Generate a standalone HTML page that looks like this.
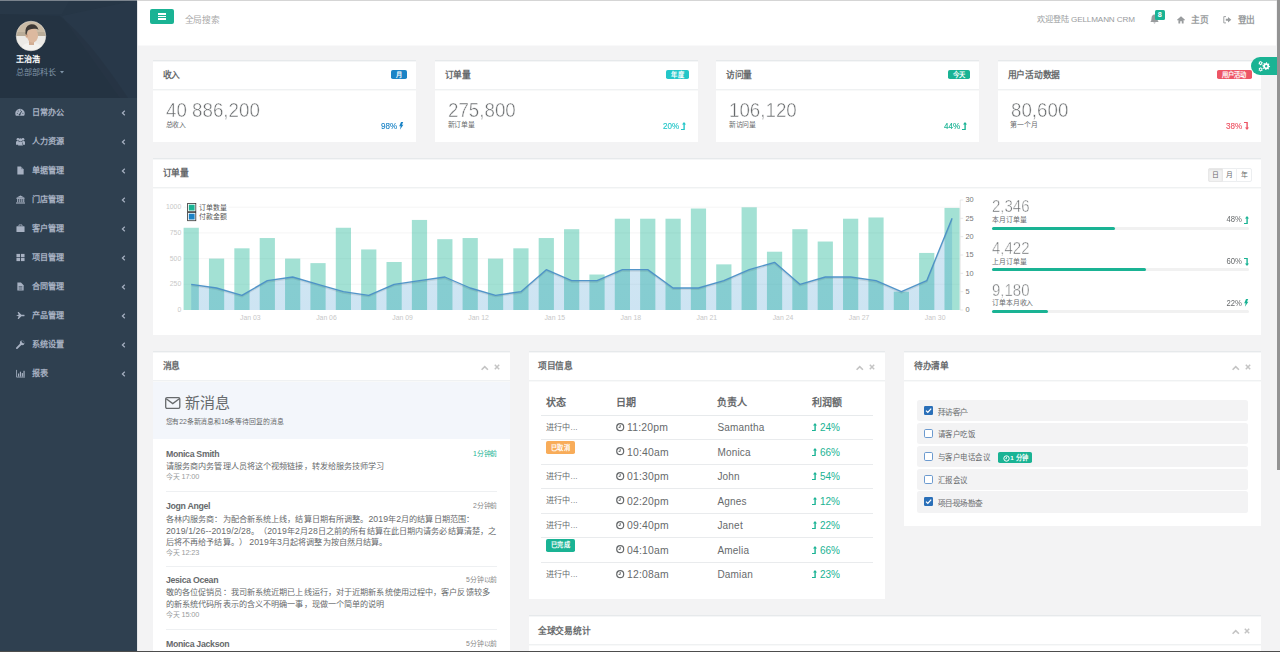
<!DOCTYPE html><html lang="zh-CN"><head><meta charset="utf-8"><style>
*{box-sizing:border-box;margin:0;padding:0}
html,body{width:1280px;height:652px;overflow:hidden}
body{position:relative;background:#f3f3f4;font-family:"Liberation Sans",sans-serif;color:#676a6c}
.t{position:absolute;white-space:nowrap;text-spacing-trim:space-all}
.l{font-size:1.07em}
.r{position:absolute}
svg{position:absolute;overflow:visible}
.b{font-weight:bold}
</style></head><body><div class="r" style="left:0.00px;top:0.00px;width:137.00px;height:652.00px;background:#2f4050"></div>
<svg style="left:0;top:0" width="137" height="98" viewBox="0 0 137 98"><rect width="137" height="98" fill="#263646"/><polygon points="0,0 70,0 62,14 0,14" fill="#283848"/><polygon points="62,16 137,0 137,98 120,98" fill="#293a4a" opacity="0.8"/><path d="M0 14 L60 16 Q90 40 128 98 L0 98Z" fill="#24313f" opacity="0.45"/></svg>
<svg style="left:15.5px;top:21px" width="30" height="30" viewBox="0 0 30 30"><defs><clipPath id="av"><circle cx="15" cy="15" r="14.8"/></clipPath><filter id="bl"><feGaussianBlur stdDeviation="0.6"/></filter></defs><g clip-path="url(#av)"><g filter="url(#bl)"><rect x="-2" y="-2" width="34" height="34" fill="#dcdad6"/><rect x="-2" y="-2" width="34" height="13" fill="#c9bba6"/><rect x="-2" y="11" width="34" height="4" fill="#b9ac98"/><rect x="-2" y="15" width="34" height="10" fill="#eceae6"/><path d="M3 32 Q5 23 12 22 L19 22 Q27 23 29 32 Z" fill="#f3f2ef"/><path d="M13 19 L18 19 L18 24 L13 24Z" fill="#d2ae94"/><ellipse cx="16.5" cy="14.5" rx="5.6" ry="7.2" fill="#dcb99f"/><ellipse cx="10.8" cy="14.8" rx="1.3" ry="2" fill="#d0a88c"/><path d="M9.5 13 Q8.5 5 14 3.5 Q21 2.5 22.5 9 Q21.5 7.5 18 7.8 Q13 8 11.5 10 Q10.8 11.5 10.5 14Z" fill="#3d3935"/></g></g><circle cx="15" cy="15" r="14.8" fill="none" stroke="#e8e4dc" stroke-width="0.5"/></svg>
<div class="t" style="left:15.50px;top:50.20px;line-height:20px;font-size:8.125px;letter-spacing:0.125px;color:#fff;font-weight:bold">王治浩</div>
<div class="t" style="left:15.50px;top:62.50px;line-height:20px;font-size:8.125px;letter-spacing:0.125px;color:#8095a8">总部部科长</div>
<svg style="left:60.3px;top:71px" width="4" height="3" viewBox="0 0 4 3"><path d="M0 0 H4 L2 2.4Z" fill="#8095a8"/></svg>
<svg style="left:15.40px;top:106.90px" width="10" height="10" viewBox="0 0 10 10"><path d="M0.9 8.8 A4.7 4.7 0 1 1 9.1 8.8 Z" fill="#a7b1c2"/><path d="M4.6 7.6 L6.6 4.2" stroke="#2f4050" stroke-width="1"/><circle cx="4.6" cy="7.6" r="0.9" fill="#2f4050"/><circle cx="2.3" cy="6.3" r="0.5" fill="#2f4050"/><circle cx="3.2" cy="4" r="0.5" fill="#2f4050"/><circle cx="5.6" cy="3.1" r="0.5" fill="#2f4050"/><circle cx="7.9" cy="6.3" r="0.5" fill="#2f4050"/></svg>
<div class="t" style="left:32.00px;top:102.70px;line-height:20px;font-size:8.125px;letter-spacing:0.125px;color:#a7b1c2;font-weight:bold">日常办公</div>
<svg style="left:121px;top:109.70px" width="5" height="6" viewBox="0 0 5 6"><path d="M3.8 0.8 L1.4 3 L3.8 5.2" fill="none" stroke="#a7b1c2" stroke-width="1.2"/></svg>
<svg style="left:15.90px;top:137.20px" width="9" height="9" viewBox="0 0 10 10"><circle cx="2.2" cy="2.6" r="1.5" fill="#a7b1c2"/><circle cx="7.8" cy="2.6" r="1.5" fill="#a7b1c2"/><circle cx="5" cy="3.2" r="1.9" fill="#a7b1c2"/><path d="M0 8.5 V5.8 Q0 4.4 1.5 4.4 H3 V8.5Z M10 8.5 V5.8 Q10 4.4 8.5 4.4 H7 V8.5Z M2.4 9.5 V7 Q2.4 5.3 4 5.3 H6 Q7.6 5.3 7.6 7 V9.5Z" fill="#a7b1c2"/></svg>
<div class="t" style="left:32.00px;top:131.70px;line-height:20px;font-size:8.125px;letter-spacing:0.125px;color:#a7b1c2;font-weight:bold">人力资源</div>
<svg style="left:121px;top:138.70px" width="5" height="6" viewBox="0 0 5 6"><path d="M3.8 0.8 L1.4 3 L3.8 5.2" fill="none" stroke="#a7b1c2" stroke-width="1.2"/></svg>
<svg style="left:15.90px;top:166.20px" width="9" height="9" viewBox="0 0 10 10"><path d="M1.5 0.5 H5.5 L8.5 3.5 V9.5 H1.5 Z" fill="#a7b1c2"/><path d="M5.5 0.5 V3.5 H8.5" fill="#2f4050" opacity="0.35"/></svg>
<div class="t" style="left:32.00px;top:160.70px;line-height:20px;font-size:8.125px;letter-spacing:0.125px;color:#a7b1c2;font-weight:bold">单据管理</div>
<svg style="left:121px;top:167.70px" width="5" height="6" viewBox="0 0 5 6"><path d="M3.8 0.8 L1.4 3 L3.8 5.2" fill="none" stroke="#a7b1c2" stroke-width="1.2"/></svg>
<svg style="left:15.90px;top:195.20px" width="9" height="9" viewBox="0 0 10 10"><path d="M5 0.5 L9.8 3 H0.2 Z" fill="#a7b1c2"/><rect x="0.5" y="3.3" width="9" height="1" fill="#a7b1c2"/><rect x="1.3" y="4.5" width="1.2" height="3.6" fill="#a7b1c2"/><rect x="3.6" y="4.5" width="1.2" height="3.6" fill="#a7b1c2"/><rect x="5.9" y="4.5" width="1.2" height="3.6" fill="#a7b1c2"/><rect x="8" y="4.5" width="1.2" height="3.6" fill="#a7b1c2"/><rect x="0" y="8.3" width="10" height="1.2" fill="#a7b1c2"/></svg>
<div class="t" style="left:32.00px;top:189.70px;line-height:20px;font-size:8.125px;letter-spacing:0.125px;color:#a7b1c2;font-weight:bold">门店管理</div>
<svg style="left:121px;top:196.70px" width="5" height="6" viewBox="0 0 5 6"><path d="M3.8 0.8 L1.4 3 L3.8 5.2" fill="none" stroke="#a7b1c2" stroke-width="1.2"/></svg>
<svg style="left:15.90px;top:224.20px" width="9" height="9" viewBox="0 0 10 10"><rect x="0.5" y="2.5" width="9" height="6.5" rx="0.6" fill="#a7b1c2"/><path d="M3.3 2.5 V1 H6.7 V2.5" fill="none" stroke="#a7b1c2" stroke-width="0.9"/></svg>
<div class="t" style="left:32.00px;top:218.70px;line-height:20px;font-size:8.125px;letter-spacing:0.125px;color:#a7b1c2;font-weight:bold">客户管理</div>
<svg style="left:121px;top:225.70px" width="5" height="6" viewBox="0 0 5 6"><path d="M3.8 0.8 L1.4 3 L3.8 5.2" fill="none" stroke="#a7b1c2" stroke-width="1.2"/></svg>
<svg style="left:15.90px;top:253.20px" width="9" height="9" viewBox="0 0 10 10"><rect x="0.5" y="1" width="4" height="3.6" fill="#a7b1c2"/><rect x="5.5" y="1" width="4" height="3.6" fill="#a7b1c2"/><rect x="0.5" y="5.4" width="4" height="3.6" fill="#a7b1c2"/><rect x="5.5" y="5.4" width="4" height="3.6" fill="#a7b1c2"/></svg>
<div class="t" style="left:32.00px;top:247.70px;line-height:20px;font-size:8.125px;letter-spacing:0.125px;color:#a7b1c2;font-weight:bold">项目管理</div>
<svg style="left:121px;top:254.70px" width="5" height="6" viewBox="0 0 5 6"><path d="M3.8 0.8 L1.4 3 L3.8 5.2" fill="none" stroke="#a7b1c2" stroke-width="1.2"/></svg>
<svg style="left:15.90px;top:282.20px" width="9" height="9" viewBox="0 0 10 10"><path d="M1.5 0.5 H5.5 L8.5 3.5 V9.5 H1.5 Z" fill="#a7b1c2"/><path d="M3 5 H7 M3 6.5 H7 M3 8 H7" stroke="#2f4050" stroke-width="0.6"/></svg>
<div class="t" style="left:32.00px;top:276.70px;line-height:20px;font-size:8.125px;letter-spacing:0.125px;color:#a7b1c2;font-weight:bold">合同管理</div>
<svg style="left:121px;top:283.70px" width="5" height="6" viewBox="0 0 5 6"><path d="M3.8 0.8 L1.4 3 L3.8 5.2" fill="none" stroke="#a7b1c2" stroke-width="1.2"/></svg>
<svg style="left:15.90px;top:311.20px" width="9" height="9" viewBox="0 0 10 10"><path d="M0 5 L3 4.3 L1.8 1 L3 1 L6 4.3 L9.2 4.3 Q10 5 9.2 5.7 L6 5.7 L3 9 L1.8 9 L3 5.7 Z" fill="#a7b1c2"/></svg>
<div class="t" style="left:32.00px;top:305.70px;line-height:20px;font-size:8.125px;letter-spacing:0.125px;color:#a7b1c2;font-weight:bold">产品管理</div>
<svg style="left:121px;top:312.70px" width="5" height="6" viewBox="0 0 5 6"><path d="M3.8 0.8 L1.4 3 L3.8 5.2" fill="none" stroke="#a7b1c2" stroke-width="1.2"/></svg>
<svg style="left:15.90px;top:340.20px" width="9" height="9" viewBox="0 0 10 10"><path d="M1 9 L5 5" stroke="#a7b1c2" stroke-width="2" stroke-linecap="round"/><circle cx="6.8" cy="3.2" r="2.6" fill="#a7b1c2"/><path d="M7.2 0.2 L9.8 2.8 L8 4 L6 2 Z" fill="#2f4050"/></svg>
<div class="t" style="left:32.00px;top:334.70px;line-height:20px;font-size:8.125px;letter-spacing:0.125px;color:#a7b1c2;font-weight:bold">系统设置</div>
<svg style="left:121px;top:341.70px" width="5" height="6" viewBox="0 0 5 6"><path d="M3.8 0.8 L1.4 3 L3.8 5.2" fill="none" stroke="#a7b1c2" stroke-width="1.2"/></svg>
<svg style="left:15.90px;top:369.20px" width="9" height="9" viewBox="0 0 10 10"><path d="M0.6 1 V9 H10" fill="none" stroke="#a7b1c2" stroke-width="0.9"/><rect x="2.2" y="5" width="1.3" height="3.5" fill="#a7b1c2"/><rect x="4.3" y="3" width="1.3" height="5.5" fill="#a7b1c2"/><rect x="6.4" y="4.5" width="1.3" height="4" fill="#a7b1c2"/><rect x="8.3" y="2" width="1.3" height="6.5" fill="#a7b1c2"/></svg>
<div class="t" style="left:32.00px;top:363.70px;line-height:20px;font-size:8.125px;letter-spacing:0.125px;color:#a7b1c2;font-weight:bold">报表</div>
<svg style="left:121px;top:370.70px" width="5" height="6" viewBox="0 0 5 6"><path d="M3.8 0.8 L1.4 3 L3.8 5.2" fill="none" stroke="#a7b1c2" stroke-width="1.2"/></svg>
<div class="r" style="left:137.00px;top:0.00px;width:1.00px;height:652.00px;background:#e4e6e8"></div>
<div class="r" style="left:138.00px;top:0.00px;width:1138.00px;height:46.00px;background:#fff"></div>
<div class="r" style="left:138.00px;top:45.00px;width:1138.00px;height:1.00px;background:#f9f9fa"></div>
<div class="r" style="left:150.00px;top:9.00px;width:24.00px;height:15.00px;background:#1ab394;border-radius:2px"></div>
<div class="r" style="left:158.00px;top:13.00px;width:8.00px;height:1.50px;background:#fff"></div>
<div class="r" style="left:158.00px;top:15.60px;width:8.00px;height:1.50px;background:#fff"></div>
<div class="r" style="left:158.00px;top:18.20px;width:8.00px;height:1.50px;background:#fff"></div>
<div class="t" style="left:184.50px;top:9.50px;line-height:20px;font-size:8.75px;letter-spacing:-0.250px;color:#a9a9a9">全局搜索</div>
<div class="t" style="left:1037.30px;top:10.20px;line-height:20px;font-size:8.125px;color:#999c9e;letter-spacing:-0.12px">欢迎登陆 GELLMANN CRM</div>
<svg style="left:1149.5px;top:14px" width="9" height="10" viewBox="0 0 9 10"><path d="M4.5 0.5 Q7.5 0.8 7.5 4.5 Q7.5 7 8.8 8 H0.2 Q1.5 7 1.5 4.5 Q1.5 0.8 4.5 0.5Z" fill="#999c9e"/><path d="M3.3 8.6 Q4.5 10.3 5.7 8.6Z" fill="#999c9e"/></svg>
<div class="r" style="left:1155.00px;top:10.20px;width:9.60px;height:10.30px;background:#1ab394;border-radius:1.5px"></div>
<div class="t" style="left:1155.00px;top:10.40px;line-height:10px;font-size:7.2px;color:#fff;font-weight:bold;width:9.6px;text-align:center">8</div>
<svg style="left:1177px;top:15.5px" width="8" height="7.5" viewBox="0 0 8 7.5"><path d="M4 0.3 L8 3.8 L7.3 4.5 L6.6 3.9 V7.5 H4.8 V5.3 H3.2 V7.5 H1.4 V3.9 L0.7 4.5 L0 3.8 Z" fill="#999c9e"/></svg>
<div class="t" style="left:1191.00px;top:9.90px;line-height:20px;font-size:8.75px;letter-spacing:-0.250px;color:#999c9e;font-weight:bold">主页</div>
<svg style="left:1223px;top:15.5px" width="8.5" height="7.5" viewBox="0 0 8.5 7.5"><path d="M3 0.6 H0.8 V6.9 H3" fill="none" stroke="#999c9e" stroke-width="0.9"/><path d="M2.8 2.7 H5 V1 L8.3 3.75 L5 6.5 V4.8 H2.8 Z" fill="#999c9e"/></svg>
<div class="t" style="left:1237.50px;top:9.90px;line-height:20px;font-size:8.75px;letter-spacing:-0.250px;color:#999c9e;font-weight:bold">登出</div>
<div class="r" style="left:153.00px;top:60.00px;width:263.20px;height:1.00px;background:#e6e9eb"></div><div class="r" style="left:153.00px;top:61.00px;width:263.20px;height:1.00px;background:#f5f6f7"></div><div class="r" style="left:153.00px;top:62.00px;width:263.20px;height:80.00px;background:#fff"></div><div class="r" style="left:153.00px;top:89.00px;width:263.20px;height:1.00px;background:#eff1f2"></div><div class="r" style="left:153.00px;top:90.00px;width:263.20px;height:1.00px;background:#f8f9f9"></div>
<div class="t" style="left:162.70px;top:65.00px;line-height:20px;font-size:8.75px;letter-spacing:-0.250px;font-weight:bold;color:#676a6c">收入</div>
<div class="r" style="left:390.55px;top:70.10px;width:16.25px;height:9.40px;background:#1c84c6;border-radius:1.8px"></div>
<div class="t" style="left:390.55px;top:69.80px;line-height:10px;font-size:6.25px;letter-spacing:0.250px;color:#fff;font-weight:bold;width:16.25px;text-align:center">月</div>
<div class="t" style="left:165.80px;top:98.30px;line-height:24px;font-size:19.7px;color:#676a6c;-webkit-text-stroke:0.5px #fff;transform:scaleX(0.952);transform-origin:0 50%">40 886,200</div>
<div class="t" style="left:165.50px;top:120.40px;line-height:10px;font-size:6.875px;letter-spacing:-0.125px;color:#676a6c">总收入</div>
<div class="t" style="right:883.00px;top:119.70px;line-height:12px;font-size:9.6px;color:#1c84c6;-webkit-text-stroke:0.15px #1c84c6;transform:scaleX(0.84);transform-origin:100% 50%">98%</div>
<svg style="left:399.20px;top:121.80px" width="4.6" height="7.8" viewBox="0 0 5 8.5"><path d="M2.2 0 H4.6 L3.2 3.1 H4.8 L1 8.5 L1.8 4.6 H0.2 Z" fill="#1c84c6"/></svg>
<div class="r" style="left:435.00px;top:60.00px;width:263.20px;height:1.00px;background:#e6e9eb"></div><div class="r" style="left:435.00px;top:61.00px;width:263.20px;height:1.00px;background:#f5f6f7"></div><div class="r" style="left:435.00px;top:62.00px;width:263.20px;height:80.00px;background:#fff"></div><div class="r" style="left:435.00px;top:89.00px;width:263.20px;height:1.00px;background:#eff1f2"></div><div class="r" style="left:435.00px;top:90.00px;width:263.20px;height:1.00px;background:#f8f9f9"></div>
<div class="t" style="left:444.70px;top:65.00px;line-height:20px;font-size:8.75px;letter-spacing:-0.250px;font-weight:bold;color:#676a6c">订单量</div>
<div class="r" style="left:666.30px;top:70.10px;width:22.50px;height:9.40px;background:#23c6c8;border-radius:1.8px"></div>
<div class="t" style="left:666.30px;top:69.80px;line-height:10px;font-size:6.25px;letter-spacing:0.250px;color:#fff;font-weight:bold;width:22.5px;text-align:center">年度</div>
<div class="t" style="left:447.80px;top:98.30px;line-height:24px;font-size:19.7px;color:#676a6c;-webkit-text-stroke:0.5px #fff;transform:scaleX(0.952);transform-origin:0 50%">275,800</div>
<div class="t" style="left:447.50px;top:120.40px;line-height:10px;font-size:6.875px;letter-spacing:-0.125px;color:#676a6c">新订单量</div>
<div class="t" style="right:601.00px;top:119.70px;line-height:12px;font-size:9.6px;color:#23c6c8;-webkit-text-stroke:0.15px #23c6c8;transform:scaleX(0.84);transform-origin:100% 50%">20%</div>
<svg style="left:681.00px;top:121.50px" width="5" height="8" viewBox="0 0 5 8"><path d="M3 0 L5 2.6 H3.8 V8 H0 V6.9 H2.4 V2.6 H1 Z" fill="#23c6c8"/></svg>
<div class="r" style="left:716.20px;top:60.00px;width:263.20px;height:1.00px;background:#e6e9eb"></div><div class="r" style="left:716.20px;top:61.00px;width:263.20px;height:1.00px;background:#f5f6f7"></div><div class="r" style="left:716.20px;top:62.00px;width:263.20px;height:80.00px;background:#fff"></div><div class="r" style="left:716.20px;top:89.00px;width:263.20px;height:1.00px;background:#eff1f2"></div><div class="r" style="left:716.20px;top:90.00px;width:263.20px;height:1.00px;background:#f8f9f9"></div>
<div class="t" style="left:725.90px;top:65.00px;line-height:20px;font-size:8.75px;letter-spacing:-0.250px;font-weight:bold;color:#676a6c">访问量</div>
<div class="r" style="left:947.50px;top:70.10px;width:22.50px;height:9.40px;background:#1ab394;border-radius:1.8px"></div>
<div class="t" style="left:947.50px;top:69.80px;line-height:10px;font-size:6.25px;letter-spacing:0.250px;color:#fff;font-weight:bold;width:22.5px;text-align:center">今天</div>
<div class="t" style="left:729.00px;top:98.30px;line-height:24px;font-size:19.7px;color:#676a6c;-webkit-text-stroke:0.5px #fff;transform:scaleX(0.952);transform-origin:0 50%">106,120</div>
<div class="t" style="left:728.70px;top:120.40px;line-height:10px;font-size:6.875px;letter-spacing:-0.125px;color:#676a6c">新访问量</div>
<div class="t" style="right:319.80px;top:119.70px;line-height:12px;font-size:9.6px;color:#1ab394;-webkit-text-stroke:0.15px #1ab394;transform:scaleX(0.84);transform-origin:100% 50%">44%</div>
<svg style="left:962.20px;top:121.50px" width="5" height="8" viewBox="0 0 5 8"><path d="M3 0 L5 2.6 H3.8 V8 H0 V6.9 H2.4 V2.6 H1 Z" fill="#1ab394"/></svg>
<div class="r" style="left:997.80px;top:60.00px;width:263.20px;height:1.00px;background:#e6e9eb"></div><div class="r" style="left:997.80px;top:61.00px;width:263.20px;height:1.00px;background:#f5f6f7"></div><div class="r" style="left:997.80px;top:62.00px;width:263.20px;height:80.00px;background:#fff"></div><div class="r" style="left:997.80px;top:89.00px;width:263.20px;height:1.00px;background:#eff1f2"></div><div class="r" style="left:997.80px;top:90.00px;width:263.20px;height:1.00px;background:#f8f9f9"></div>
<div class="t" style="left:1007.50px;top:65.00px;line-height:20px;font-size:8.75px;letter-spacing:-0.250px;font-weight:bold;color:#676a6c">用户活动数据</div>
<div class="r" style="left:1216.60px;top:70.10px;width:35.00px;height:9.40px;background:#ed5565;border-radius:1.8px"></div>
<div class="t" style="left:1216.60px;top:69.80px;line-height:10px;font-size:6.25px;letter-spacing:0.250px;color:#fff;font-weight:bold;width:35.0px;text-align:center">用户活动</div>
<div class="t" style="left:1010.60px;top:98.30px;line-height:24px;font-size:19.7px;color:#676a6c;-webkit-text-stroke:0.5px #fff;transform:scaleX(0.952);transform-origin:0 50%">80,600</div>
<div class="t" style="left:1010.30px;top:120.40px;line-height:10px;font-size:6.875px;letter-spacing:-0.125px;color:#676a6c">第一个月</div>
<div class="t" style="right:38.20px;top:119.70px;line-height:12px;font-size:9.6px;color:#ed5565;-webkit-text-stroke:0.15px #ed5565;transform:scaleX(0.84);transform-origin:100% 50%">38%</div>
<svg style="left:1243.80px;top:121.50px" width="5" height="8" viewBox="0 0 5 8"><path d="M0 0 H3.8 V5.4 H5 L3 8 L1 5.4 H2.4 V1.1 H0 Z" fill="#ed5565"/></svg>
<div class="r" style="left:153.00px;top:158.00px;width:1108.00px;height:1.00px;background:#e6e9eb"></div><div class="r" style="left:153.00px;top:159.00px;width:1108.00px;height:1.00px;background:#f5f6f7"></div><div class="r" style="left:153.00px;top:160.00px;width:1108.00px;height:175.00px;background:#fff"></div><div class="r" style="left:153.00px;top:187.00px;width:1108.00px;height:1.00px;background:#eff1f2"></div><div class="r" style="left:153.00px;top:188.00px;width:1108.00px;height:1.00px;background:#f8f9f9"></div>
<div class="t" style="left:162.60px;top:163.00px;line-height:20px;font-size:8.75px;letter-spacing:-0.250px;font-weight:bold">订单量</div>
<div class="r" style="left:1208.20px;top:168.10px;width:43.40px;height:13.50px;border:1px solid #eceef0;border-radius:2px;background:#fff"></div>
<div class="r" style="left:1208.20px;top:168.10px;width:14.50px;height:13.50px;border:1px solid #e8e8e8;border-radius:2px 0 0 2px;background:#f3f3f3;box-shadow:inset 0 1px 2px rgba(0,0,0,0.08)"></div>
<div class="r" style="left:1236.30px;top:168.10px;width:1.00px;height:13.50px;background:#eef0f2"></div>
<div class="t" style="left:1208.20px;top:169.40px;line-height:12px;font-size:6.875px;letter-spacing:-0.125px;color:#676a6c;width:14px;text-align:center">日</div>
<div class="t" style="left:1222.30px;top:169.40px;line-height:12px;font-size:6.875px;letter-spacing:-0.125px;color:#676a6c;width:14px;text-align:center">月</div>
<div class="t" style="left:1237.10px;top:169.40px;line-height:12px;font-size:6.875px;letter-spacing:-0.125px;color:#676a6c;width:14px;text-align:center">年</div>
<svg style="left:0;top:0" width="1280" height="652" viewBox="0 0 1280 652"><defs><linearGradient id="lf" x1="0" y1="0" x2="0" y2="1"><stop offset="0" stop-color="#1c84c6" stop-opacity="0.2"/><stop offset="1" stop-color="#1c84c6" stop-opacity="0.22"/></linearGradient></defs><line x1="183.6" x2="959.7" y1="284.30" y2="284.30" stroke="#f2f2f2" stroke-width="0.7"/><line x1="183.6" x2="959.7" y1="258.60" y2="258.60" stroke="#f2f2f2" stroke-width="0.7"/><line x1="183.6" x2="959.7" y1="232.90" y2="232.90" stroke="#f2f2f2" stroke-width="0.7"/><line x1="183.6" x2="959.7" y1="207.20" y2="207.20" stroke="#f2f2f2" stroke-width="0.7"/><rect x="183.60" y="227.76" width="15.22" height="82.24" fill="#1ab394" fill-opacity="0.4"/><rect x="208.96" y="258.60" width="15.22" height="51.40" fill="#1ab394" fill-opacity="0.4"/><rect x="234.33" y="248.32" width="15.22" height="61.68" fill="#1ab394" fill-opacity="0.4"/><rect x="259.69" y="238.04" width="15.22" height="71.96" fill="#1ab394" fill-opacity="0.4"/><rect x="285.05" y="258.60" width="15.22" height="51.40" fill="#1ab394" fill-opacity="0.4"/><rect x="310.41" y="263.12" width="15.22" height="46.88" fill="#1ab394" fill-opacity="0.4"/><rect x="335.78" y="227.76" width="15.22" height="82.24" fill="#1ab394" fill-opacity="0.4"/><rect x="361.14" y="249.45" width="15.22" height="60.55" fill="#1ab394" fill-opacity="0.4"/><rect x="386.50" y="261.99" width="15.22" height="48.01" fill="#1ab394" fill-opacity="0.4"/><rect x="411.86" y="219.94" width="15.22" height="90.06" fill="#1ab394" fill-opacity="0.4"/><rect x="437.23" y="239.17" width="15.22" height="70.83" fill="#1ab394" fill-opacity="0.4"/><rect x="462.59" y="238.04" width="15.22" height="71.96" fill="#1ab394" fill-opacity="0.4"/><rect x="487.95" y="258.60" width="15.22" height="51.40" fill="#1ab394" fill-opacity="0.4"/><rect x="513.32" y="248.32" width="15.22" height="61.68" fill="#1ab394" fill-opacity="0.4"/><rect x="538.68" y="238.04" width="15.22" height="71.96" fill="#1ab394" fill-opacity="0.4"/><rect x="564.04" y="229.20" width="15.22" height="80.80" fill="#1ab394" fill-opacity="0.4"/><rect x="589.40" y="274.53" width="15.22" height="35.47" fill="#1ab394" fill-opacity="0.4"/><rect x="614.77" y="218.71" width="15.22" height="91.29" fill="#1ab394" fill-opacity="0.4"/><rect x="640.13" y="218.71" width="15.22" height="91.29" fill="#1ab394" fill-opacity="0.4"/><rect x="665.49" y="218.71" width="15.22" height="91.29" fill="#1ab394" fill-opacity="0.4"/><rect x="690.85" y="208.53" width="15.22" height="101.47" fill="#1ab394" fill-opacity="0.4"/><rect x="716.22" y="264.36" width="15.22" height="45.64" fill="#1ab394" fill-opacity="0.4"/><rect x="741.58" y="207.30" width="15.22" height="102.70" fill="#1ab394" fill-opacity="0.4"/><rect x="766.94" y="251.71" width="15.22" height="58.29" fill="#1ab394" fill-opacity="0.4"/><rect x="792.31" y="229.20" width="15.22" height="80.80" fill="#1ab394" fill-opacity="0.4"/><rect x="817.67" y="241.53" width="15.22" height="68.47" fill="#1ab394" fill-opacity="0.4"/><rect x="843.03" y="218.71" width="15.22" height="91.29" fill="#1ab394" fill-opacity="0.4"/><rect x="868.39" y="217.48" width="15.22" height="92.52" fill="#1ab394" fill-opacity="0.4"/><rect x="893.76" y="291.70" width="15.22" height="18.30" fill="#1ab394" fill-opacity="0.4"/><rect x="919.12" y="252.94" width="15.22" height="57.06" fill="#1ab394" fill-opacity="0.4"/><rect x="944.48" y="207.92" width="15.22" height="102.08" fill="#1ab394" fill-opacity="0.4"/><polygon points="191.21,310.0 191.21,284.33 216.57,288.00 241.93,295.33 267.30,280.67 292.66,277.00 318.02,284.33 343.39,291.67 368.75,295.33 394.11,284.33 419.47,280.67 444.84,277.00 470.20,288.00 495.56,295.33 520.92,291.67 546.29,269.67 571.65,280.67 597.01,280.67 622.38,269.67 647.74,269.67 673.10,288.00 698.46,288.00 723.83,280.67 749.19,269.67 774.55,262.33 799.91,284.33 825.28,277.00 850.64,277.00 876.00,280.67 901.37,291.67 926.73,280.67 952.09,218.33 952.09,310.0" fill="url(#lf)"/><polyline points="191.21,285.53 216.57,289.20 241.93,296.53 267.30,281.87 292.66,278.20 318.02,285.53 343.39,292.87 368.75,296.53 394.11,285.53 419.47,281.87 444.84,278.20 470.20,289.20 495.56,296.53 520.92,292.87 546.29,270.87 571.65,281.87 597.01,281.87 622.38,270.87 647.74,270.87 673.10,289.20 698.46,289.20 723.83,281.87 749.19,270.87 774.55,263.53 799.91,285.53 825.28,278.20 850.64,278.20 876.00,281.87 901.37,292.87 926.73,281.87 952.09,219.53" fill="none" stroke="#000" stroke-opacity="0.08" stroke-width="1.6"/><polyline points="191.21,284.33 216.57,288.00 241.93,295.33 267.30,280.67 292.66,277.00 318.02,284.33 343.39,291.67 368.75,295.33 394.11,284.33 419.47,280.67 444.84,277.00 470.20,288.00 495.56,295.33 520.92,291.67 546.29,269.67 571.65,280.67 597.01,280.67 622.38,269.67 647.74,269.67 673.10,288.00 698.46,288.00 723.83,280.67 749.19,269.67 774.55,262.33 799.91,284.33 825.28,277.00 850.64,277.00 876.00,280.67 901.37,291.67 926.73,280.67 952.09,218.33" fill="none" stroke="#4a8fc6" stroke-opacity="0.95" stroke-width="1.35" stroke-linejoin="round"/><line x1="960.2" x2="960.2" y1="200.0" y2="310.0" stroke="#e0e0e0" stroke-width="0.7"/><line x1="960.2" x2="963.2" y1="310.00" y2="310.00" stroke="#e0e0e0" stroke-width="0.7"/><line x1="960.2" x2="963.2" y1="291.67" y2="291.67" stroke="#e0e0e0" stroke-width="0.7"/><line x1="960.2" x2="963.2" y1="273.33" y2="273.33" stroke="#e0e0e0" stroke-width="0.7"/><line x1="960.2" x2="963.2" y1="255.00" y2="255.00" stroke="#e0e0e0" stroke-width="0.7"/><line x1="960.2" x2="963.2" y1="236.67" y2="236.67" stroke="#e0e0e0" stroke-width="0.7"/><line x1="960.2" x2="963.2" y1="218.33" y2="218.33" stroke="#e0e0e0" stroke-width="0.7"/><line x1="960.2" x2="963.2" y1="200.00" y2="200.00" stroke="#e0e0e0" stroke-width="0.7"/><rect x="186.5" y="202.5" width="42" height="19.5" fill="#fff" fill-opacity="0.85"/><rect x="187.6" y="203.50" width="8.2" height="8.2" fill="none" stroke="#333" stroke-width="0.8"/><rect x="188.8" y="204.70" width="5.8" height="5.8" fill="#1ab394"/><rect x="187.6" y="212.50" width="8.2" height="8.2" fill="none" stroke="#333" stroke-width="0.8"/><rect x="188.8" y="213.70" width="5.8" height="5.8" fill="#1c84c6"/></svg>
<div class="t" style="left:199.20px;top:202.60px;line-height:10px;font-size:6.875px;letter-spacing:-0.125px;color:#545454">订单数量</div>
<div class="t" style="left:199.20px;top:211.60px;line-height:10px;font-size:6.875px;letter-spacing:-0.125px;color:#545454">付款金额</div>
<div class="t" style="right:1098.80px;top:305.00px;line-height:10px;font-size:6.875px;color:#c8c8c8">0</div>
<div class="t" style="right:1098.80px;top:279.30px;line-height:10px;font-size:6.875px;color:#c8c8c8">250</div>
<div class="t" style="right:1098.80px;top:253.60px;line-height:10px;font-size:6.875px;color:#c8c8c8">500</div>
<div class="t" style="right:1098.80px;top:227.90px;line-height:10px;font-size:6.875px;color:#c8c8c8">750</div>
<div class="t" style="right:1098.80px;top:202.20px;line-height:10px;font-size:6.875px;color:#c8c8c8">1000</div>
<div class="t" style="left:965.50px;top:305.30px;line-height:10px;font-size:7.4px;color:#777">0</div>
<div class="t" style="left:965.50px;top:286.97px;line-height:10px;font-size:7.4px;color:#777">5</div>
<div class="t" style="left:965.50px;top:268.63px;line-height:10px;font-size:7.4px;color:#777">10</div>
<div class="t" style="left:965.50px;top:250.30px;line-height:10px;font-size:7.4px;color:#777">15</div>
<div class="t" style="left:965.50px;top:231.97px;line-height:10px;font-size:7.4px;color:#777">20</div>
<div class="t" style="left:965.50px;top:213.63px;line-height:10px;font-size:7.4px;color:#777">25</div>
<div class="t" style="left:965.50px;top:195.30px;line-height:10px;font-size:7.4px;color:#777">30</div>
<div class="t" style="left:230.39px;width:40px;text-align:center;top:312.80px;line-height:10px;font-size:6.875px;color:#c8c8c8">Jan 03</div>
<div class="t" style="left:306.48px;width:40px;text-align:center;top:312.80px;line-height:10px;font-size:6.875px;color:#c8c8c8">Jan 06</div>
<div class="t" style="left:382.57px;width:40px;text-align:center;top:312.80px;line-height:10px;font-size:6.875px;color:#c8c8c8">Jan 09</div>
<div class="t" style="left:458.65px;width:40px;text-align:center;top:312.80px;line-height:10px;font-size:6.875px;color:#c8c8c8">Jan 12</div>
<div class="t" style="left:534.74px;width:40px;text-align:center;top:312.80px;line-height:10px;font-size:6.875px;color:#c8c8c8">Jan 15</div>
<div class="t" style="left:610.83px;width:40px;text-align:center;top:312.80px;line-height:10px;font-size:6.875px;color:#c8c8c8">Jan 18</div>
<div class="t" style="left:686.92px;width:40px;text-align:center;top:312.80px;line-height:10px;font-size:6.875px;color:#c8c8c8">Jan 21</div>
<div class="t" style="left:763.01px;width:40px;text-align:center;top:312.80px;line-height:10px;font-size:6.875px;color:#c8c8c8">Jan 24</div>
<div class="t" style="left:839.09px;width:40px;text-align:center;top:312.80px;line-height:10px;font-size:6.875px;color:#c8c8c8">Jan 27</div>
<div class="t" style="left:915.18px;width:40px;text-align:center;top:312.80px;line-height:10px;font-size:6.875px;color:#c8c8c8">Jan 30</div>
<div class="t" style="left:991.50px;top:196.40px;line-height:20px;font-size:16.2px;color:#676a6c;-webkit-text-stroke:0.5px #fff;transform:scaleX(0.926);transform-origin:0 50%">2,346</div>
<div class="t" style="left:992.00px;top:214.90px;line-height:10px;font-size:6.875px;letter-spacing:-0.125px;color:#676a6c">本月订单量</div>
<div class="r" style="left:992.00px;top:226.90px;width:256.50px;height:3.10px;background:#f1f1f1;border-radius:1.5px"></div>
<div class="r" style="left:992.00px;top:226.90px;width:123.12px;height:3.10px;background:#1ab394;border-radius:1.5px"></div>
<div class="t" style="right:38.50px;top:213.40px;line-height:12px;font-size:9.4px;color:#676a6c;transform:scaleX(0.82);transform-origin:100% 50%">48%</div>
<svg style="left:1244.00px;top:215.50px" width="5" height="8" viewBox="0 0 5 8"><path d="M3 0 L5 2.6 H3.8 V8 H0 V6.9 H2.4 V2.6 H1 Z" fill="#1ab394"/></svg>
<div class="t" style="left:991.50px;top:238.30px;line-height:20px;font-size:16.2px;color:#676a6c;-webkit-text-stroke:0.5px #fff;transform:scaleX(0.926);transform-origin:0 50%">4,422</div>
<div class="t" style="left:992.00px;top:256.90px;line-height:10px;font-size:6.875px;letter-spacing:-0.125px;color:#676a6c">上月订单量</div>
<div class="r" style="left:992.00px;top:268.30px;width:256.50px;height:3.10px;background:#f1f1f1;border-radius:1.5px"></div>
<div class="r" style="left:992.00px;top:268.30px;width:153.90px;height:3.10px;background:#1ab394;border-radius:1.5px"></div>
<div class="t" style="right:38.50px;top:255.40px;line-height:12px;font-size:9.4px;color:#676a6c;transform:scaleX(0.82);transform-origin:100% 50%">60%</div>
<svg style="left:1244.00px;top:257.50px" width="5" height="8" viewBox="0 0 5 8"><path d="M0 0 H3.8 V5.4 H5 L3 8 L1 5.4 H2.4 V1.1 H0 Z" fill="#1ab394"/></svg>
<div class="t" style="left:991.50px;top:279.50px;line-height:20px;font-size:16.2px;color:#676a6c;-webkit-text-stroke:0.5px #fff;transform:scaleX(0.926);transform-origin:0 50%">9,180</div>
<div class="t" style="left:992.00px;top:298.20px;line-height:10px;font-size:6.875px;letter-spacing:-0.125px;color:#676a6c">订单本月收入</div>
<div class="r" style="left:992.00px;top:310.20px;width:256.50px;height:3.10px;background:#f1f1f1;border-radius:1.5px"></div>
<div class="r" style="left:992.00px;top:310.20px;width:56.43px;height:3.10px;background:#1ab394;border-radius:1.5px"></div>
<div class="t" style="right:38.50px;top:296.70px;line-height:12px;font-size:9.4px;color:#676a6c;transform:scaleX(0.82);transform-origin:100% 50%">22%</div>
<svg style="left:1244.20px;top:299.10px" width="4.6" height="7.8" viewBox="0 0 5 8.5"><path d="M2.2 0 H4.6 L3.2 3.1 H4.8 L1 8.5 L1.8 4.6 H0.2 Z" fill="#1ab394"/></svg>
<div class="r" style="left:153.00px;top:351.00px;width:357.20px;height:1.00px;background:#e6e9eb"></div><div class="r" style="left:153.00px;top:352.00px;width:357.20px;height:1.00px;background:#f5f6f7"></div><div class="r" style="left:153.00px;top:353.00px;width:357.20px;height:299.00px;background:#fff"></div><div class="r" style="left:153.00px;top:380.00px;width:357.20px;height:1.00px;background:#eff1f2"></div><div class="r" style="left:153.00px;top:381.00px;width:357.20px;height:1.00px;background:#f8f9f9"></div>
<div class="t" style="left:162.60px;top:356.00px;line-height:20px;font-size:8.75px;letter-spacing:-0.250px;font-weight:bold">消息</div>
<svg style="left:481.00px;top:363.50px" width="8" height="8" viewBox="0 0 8 8"><path d="M0.6 5.8 L3.75 2.6 L6.9 5.8" fill="none" stroke="#c4c4c4" stroke-width="1.6"/></svg><svg style="left:493.90px;top:363.50px" width="7" height="7" viewBox="0 0 7 7"><path d="M0.8 0.8 L5.2 5.2 M5.2 0.8 L0.8 5.2" fill="none" stroke="#c4c4c4" stroke-width="1.5"/></svg>
<div class="r" style="left:153.00px;top:381.70px;width:357.20px;height:57.50px;background:#f3f6fb"></div>
<svg style="left:165.3px;top:396.7px" width="15.5" height="12" viewBox="0 0 15.5 12"><rect x="0.7" y="0.7" width="14.1" height="10.6" rx="1.3" fill="none" stroke="#676a6c" stroke-width="1.3"/><path d="M1.2 1.8 L7.75 6.6 L14.3 1.8" fill="none" stroke="#676a6c" stroke-width="1.3"/></svg>
<div class="t" style="left:184.50px;top:392.90px;line-height:20px;font-size:15px;color:#676a6c">新消息</div>
<div class="t" style="left:165.60px;top:417.00px;line-height:10px;font-size:6.875px;letter-spacing:-0.125px;color:#676a6c">您有22条新消息和16条等待回复的消息</div>
<div class="t" style="left:165.90px;top:448.00px;line-height:12px;font-size:8.75px;font-weight:bold;color:#676a6c;letter-spacing:-0.3px">Monica Smith</div>
<div class="t" style="right:782.70px;top:448.80px;line-height:10px;font-size:6.875px;letter-spacing:-0.125px;color:#1ab394">1分钟前</div>
<div class="t" style="left:165.90px;top:461.00px;line-height:12px;font-size:8.125px;color:#676a6c;letter-spacing:0.1px">请服务商内务管理人员将这个视频链接，转发给服务技师学习</div>
<div class="t" style="left:165.90px;top:472.30px;line-height:10px;font-size:6.875px;letter-spacing:-0.125px;color:#999c9e">今天 <span class="l">17:00</span></div>
<div class="r" style="left:166.00px;top:490.90px;width:331.30px;height:1.00px;background:#eef0f2"></div>
<div class="t" style="left:165.90px;top:500.10px;line-height:12px;font-size:8.75px;font-weight:bold;color:#676a6c;letter-spacing:-0.3px">Jogn Angel</div>
<div class="t" style="right:782.70px;top:500.90px;line-height:10px;font-size:6.875px;letter-spacing:-0.125px;color:#888">2分钟前</div>
<div class="t" style="left:165.90px;top:513.10px;line-height:12px;font-size:8.125px;color:#676a6c;letter-spacing:0.1px">各林内服务商：为配合新系统上线，结算日期有所调整。<span class="l">2019</span>年<span class="l">2</span>月的结算日期范围：</div>
<div class="t" style="left:165.90px;top:524.70px;line-height:12px;font-size:8.125px;color:#676a6c;letter-spacing:0.1px"><span class="l">2019/1/26--2019/2/28</span>。（<span class="l">2019</span>年<span class="l">2</span>月<span class="l">28</span>日之前的所有结算在此日期内请务必结算清楚，之</div>
<div class="t" style="left:165.90px;top:536.30px;line-height:12px;font-size:8.125px;color:#676a6c;letter-spacing:0.1px">后将不再给予结算。） <span class="l">2019</span>年<span class="l">3</span>月起将调整为按自然月结算。</div>
<div class="t" style="left:165.90px;top:547.60px;line-height:10px;font-size:6.875px;letter-spacing:-0.125px;color:#999c9e">今天 <span class="l">12:23</span></div>
<div class="r" style="left:166.00px;top:566.20px;width:331.30px;height:1.00px;background:#eef0f2"></div>
<div class="t" style="left:165.90px;top:574.40px;line-height:12px;font-size:8.75px;font-weight:bold;color:#676a6c;letter-spacing:-0.3px">Jesica Ocean</div>
<div class="t" style="right:782.70px;top:575.20px;line-height:10px;font-size:6.875px;letter-spacing:-0.125px;color:#888">5分钟以前</div>
<div class="t" style="left:165.90px;top:587.40px;line-height:12px;font-size:8.125px;color:#676a6c;letter-spacing:0.1px">敬的各位促销员：我司新系统近期已上线运行，对于近期新系统使用过程中，客户反馈较多</div>
<div class="t" style="left:165.90px;top:599.00px;line-height:12px;font-size:8.125px;color:#676a6c;letter-spacing:0.1px">的新系统代码所表示的含义不明确一事，现做一个简单的说明</div>
<div class="t" style="left:165.90px;top:610.30px;line-height:10px;font-size:6.875px;letter-spacing:-0.125px;color:#999c9e">今天 <span class="l">15:00</span></div>
<div class="r" style="left:166.00px;top:628.90px;width:331.30px;height:1.00px;background:#eef0f2"></div>
<div class="t" style="left:165.90px;top:638.00px;line-height:12px;font-size:8.75px;font-weight:bold;color:#676a6c;letter-spacing:-0.3px">Monica Jackson</div>
<div class="t" style="right:782.70px;top:638.80px;line-height:10px;font-size:6.875px;letter-spacing:-0.125px;color:#888">5分钟以前</div>
<div class="r" style="left:528.70px;top:351.00px;width:356.50px;height:1.00px;background:#e6e9eb"></div><div class="r" style="left:528.70px;top:352.00px;width:356.50px;height:1.00px;background:#f5f6f7"></div><div class="r" style="left:528.70px;top:353.00px;width:356.50px;height:246.00px;background:#fff"></div><div class="r" style="left:528.70px;top:380.00px;width:356.50px;height:1.00px;background:#eff1f2"></div><div class="r" style="left:528.70px;top:381.00px;width:356.50px;height:1.00px;background:#f8f9f9"></div>
<div class="t" style="left:537.90px;top:356.10px;line-height:20px;font-size:8.75px;letter-spacing:-0.250px;font-weight:bold">项目信息</div>
<svg style="left:856.40px;top:363.80px" width="8" height="8" viewBox="0 0 8 8"><path d="M0.6 5.8 L3.75 2.6 L6.9 5.8" fill="none" stroke="#c4c4c4" stroke-width="1.6"/></svg><svg style="left:869.30px;top:363.80px" width="7" height="7" viewBox="0 0 7 7"><path d="M0.8 0.8 L5.2 5.2 M5.2 0.8 L0.8 5.2" fill="none" stroke="#c4c4c4" stroke-width="1.5"/></svg>
<div class="t" style="left:546.20px;top:392.90px;line-height:20px;font-size:10px;font-weight:bold">状态</div>
<div class="t" style="left:615.90px;top:392.90px;line-height:20px;font-size:10px;font-weight:bold">日期</div>
<div class="t" style="left:717.40px;top:392.90px;line-height:20px;font-size:10px;font-weight:bold">负责人</div>
<div class="t" style="left:811.90px;top:392.90px;line-height:20px;font-size:10px;font-weight:bold">利润额</div>
<div class="r" style="left:541.40px;top:414.80px;width:331.30px;height:1.20px;background:#e7eaec"></div>
<div class="t" style="left:546.20px;top:421.80px;line-height:12px;font-size:8.125px;letter-spacing:0.125px;color:#676a6c">进行中...</div>
<svg style="left:615.6px;top:423.00px" width="8.4" height="8.4" viewBox="0 0 8.4 8.4"><circle cx="4.2" cy="4.2" r="3.5" fill="none" stroke="#676a6c" stroke-width="1.2"/><path d="M4.2 2 V4.4 H2.6" fill="none" stroke="#676a6c" stroke-width="1"/></svg>
<div class="t" style="left:627.00px;top:421.20px;line-height:14px;font-size:10.4px;color:#676a6c;letter-spacing:0.2px">11:20pm</div>
<div class="t" style="left:717.40px;top:421.20px;line-height:14px;font-size:10px;color:#676a6c;letter-spacing:0.2px">Samantha</div>
<svg style="left:812.00px;top:423.20px" width="5" height="8" viewBox="0 0 5 8"><path d="M3 0 L5 2.6 H3.8 V8 H0 V6.9 H2.4 V2.6 H1 Z" fill="#1ab394"/></svg>
<div class="t" style="left:819.90px;top:421.20px;line-height:14px;font-size:10px;color:#1ab394">24%</div>
<div class="r" style="left:541.40px;top:439.30px;width:331.30px;height:1.00px;background:#e9ebed"></div>
<div class="r" style="left:546.10px;top:441.30px;width:28.80px;height:12.40px;background:#f8ac59;border-radius:1.8px"></div>
<div class="t" style="left:546.10px;top:442.50px;line-height:10px;font-size:6.25px;letter-spacing:0.250px;color:#fff;font-weight:bold;width:28.8px;text-align:center">已取消</div>
<svg style="left:615.6px;top:447.40px" width="8.4" height="8.4" viewBox="0 0 8.4 8.4"><circle cx="4.2" cy="4.2" r="3.5" fill="none" stroke="#676a6c" stroke-width="1.2"/><path d="M4.2 2 V4.4 H2.6" fill="none" stroke="#676a6c" stroke-width="1"/></svg>
<div class="t" style="left:627.00px;top:445.60px;line-height:14px;font-size:10.4px;color:#676a6c;letter-spacing:0.2px">10:40am</div>
<div class="t" style="left:717.40px;top:445.60px;line-height:14px;font-size:10px;color:#676a6c;letter-spacing:0.2px">Monica</div>
<svg style="left:812.00px;top:447.60px" width="5" height="8" viewBox="0 0 5 8"><path d="M3 0 L5 2.6 H3.8 V8 H0 V6.9 H2.4 V2.6 H1 Z" fill="#1ab394"/></svg>
<div class="t" style="left:819.90px;top:445.60px;line-height:14px;font-size:10px;color:#1ab394">66%</div>
<div class="r" style="left:541.40px;top:463.80px;width:331.30px;height:1.00px;background:#e9ebed"></div>
<div class="t" style="left:546.20px;top:470.70px;line-height:12px;font-size:8.125px;letter-spacing:0.125px;color:#676a6c">进行中...</div>
<svg style="left:615.6px;top:471.90px" width="8.4" height="8.4" viewBox="0 0 8.4 8.4"><circle cx="4.2" cy="4.2" r="3.5" fill="none" stroke="#676a6c" stroke-width="1.2"/><path d="M4.2 2 V4.4 H2.6" fill="none" stroke="#676a6c" stroke-width="1"/></svg>
<div class="t" style="left:627.00px;top:470.10px;line-height:14px;font-size:10.4px;color:#676a6c;letter-spacing:0.2px">01:30pm</div>
<div class="t" style="left:717.40px;top:470.10px;line-height:14px;font-size:10px;color:#676a6c;letter-spacing:0.2px">John</div>
<svg style="left:812.00px;top:472.10px" width="5" height="8" viewBox="0 0 5 8"><path d="M3 0 L5 2.6 H3.8 V8 H0 V6.9 H2.4 V2.6 H1 Z" fill="#1ab394"/></svg>
<div class="t" style="left:819.90px;top:470.10px;line-height:14px;font-size:10px;color:#1ab394">54%</div>
<div class="r" style="left:541.40px;top:488.30px;width:331.30px;height:1.00px;background:#e9ebed"></div>
<div class="t" style="left:546.20px;top:495.20px;line-height:12px;font-size:8.125px;letter-spacing:0.125px;color:#676a6c">进行中...</div>
<svg style="left:615.6px;top:496.40px" width="8.4" height="8.4" viewBox="0 0 8.4 8.4"><circle cx="4.2" cy="4.2" r="3.5" fill="none" stroke="#676a6c" stroke-width="1.2"/><path d="M4.2 2 V4.4 H2.6" fill="none" stroke="#676a6c" stroke-width="1"/></svg>
<div class="t" style="left:627.00px;top:494.60px;line-height:14px;font-size:10.4px;color:#676a6c;letter-spacing:0.2px">02:20pm</div>
<div class="t" style="left:717.40px;top:494.60px;line-height:14px;font-size:10px;color:#676a6c;letter-spacing:0.2px">Agnes</div>
<svg style="left:812.00px;top:496.60px" width="5" height="8" viewBox="0 0 5 8"><path d="M3 0 L5 2.6 H3.8 V8 H0 V6.9 H2.4 V2.6 H1 Z" fill="#1ab394"/></svg>
<div class="t" style="left:819.90px;top:494.60px;line-height:14px;font-size:10px;color:#1ab394">12%</div>
<div class="r" style="left:541.40px;top:512.80px;width:331.30px;height:1.00px;background:#e9ebed"></div>
<div class="t" style="left:546.20px;top:519.70px;line-height:12px;font-size:8.125px;letter-spacing:0.125px;color:#676a6c">进行中...</div>
<svg style="left:615.6px;top:520.90px" width="8.4" height="8.4" viewBox="0 0 8.4 8.4"><circle cx="4.2" cy="4.2" r="3.5" fill="none" stroke="#676a6c" stroke-width="1.2"/><path d="M4.2 2 V4.4 H2.6" fill="none" stroke="#676a6c" stroke-width="1"/></svg>
<div class="t" style="left:627.00px;top:519.10px;line-height:14px;font-size:10.4px;color:#676a6c;letter-spacing:0.2px">09:40pm</div>
<div class="t" style="left:717.40px;top:519.10px;line-height:14px;font-size:10px;color:#676a6c;letter-spacing:0.2px">Janet</div>
<svg style="left:812.00px;top:521.10px" width="5" height="8" viewBox="0 0 5 8"><path d="M3 0 L5 2.6 H3.8 V8 H0 V6.9 H2.4 V2.6 H1 Z" fill="#1ab394"/></svg>
<div class="t" style="left:819.90px;top:519.10px;line-height:14px;font-size:10px;color:#1ab394">22%</div>
<div class="r" style="left:541.40px;top:537.20px;width:331.30px;height:1.00px;background:#e9ebed"></div>
<div class="r" style="left:546.10px;top:539.20px;width:28.80px;height:12.40px;background:#1ab394;border-radius:1.8px"></div>
<div class="t" style="left:546.10px;top:540.40px;line-height:10px;font-size:6.25px;letter-spacing:0.250px;color:#fff;font-weight:bold;width:28.8px;text-align:center">已完成</div>
<svg style="left:615.6px;top:545.30px" width="8.4" height="8.4" viewBox="0 0 8.4 8.4"><circle cx="4.2" cy="4.2" r="3.5" fill="none" stroke="#676a6c" stroke-width="1.2"/><path d="M4.2 2 V4.4 H2.6" fill="none" stroke="#676a6c" stroke-width="1"/></svg>
<div class="t" style="left:627.00px;top:543.50px;line-height:14px;font-size:10.4px;color:#676a6c;letter-spacing:0.2px">04:10am</div>
<div class="t" style="left:717.40px;top:543.50px;line-height:14px;font-size:10px;color:#676a6c;letter-spacing:0.2px">Amelia</div>
<svg style="left:812.00px;top:545.50px" width="5" height="8" viewBox="0 0 5 8"><path d="M3 0 L5 2.6 H3.8 V8 H0 V6.9 H2.4 V2.6 H1 Z" fill="#1ab394"/></svg>
<div class="t" style="left:819.90px;top:543.50px;line-height:14px;font-size:10px;color:#1ab394">66%</div>
<div class="r" style="left:541.40px;top:561.90px;width:331.30px;height:1.00px;background:#e9ebed"></div>
<div class="t" style="left:546.20px;top:568.80px;line-height:12px;font-size:8.125px;letter-spacing:0.125px;color:#676a6c">进行中...</div>
<svg style="left:615.6px;top:570.00px" width="8.4" height="8.4" viewBox="0 0 8.4 8.4"><circle cx="4.2" cy="4.2" r="3.5" fill="none" stroke="#676a6c" stroke-width="1.2"/><path d="M4.2 2 V4.4 H2.6" fill="none" stroke="#676a6c" stroke-width="1"/></svg>
<div class="t" style="left:627.00px;top:568.20px;line-height:14px;font-size:10.4px;color:#676a6c;letter-spacing:0.2px">12:08am</div>
<div class="t" style="left:717.40px;top:568.20px;line-height:14px;font-size:10px;color:#676a6c;letter-spacing:0.2px">Damian</div>
<svg style="left:812.00px;top:570.20px" width="5" height="8" viewBox="0 0 5 8"><path d="M3 0 L5 2.6 H3.8 V8 H0 V6.9 H2.4 V2.6 H1 Z" fill="#1ab394"/></svg>
<div class="t" style="left:819.90px;top:568.20px;line-height:14px;font-size:10px;color:#1ab394">23%</div>
<div class="r" style="left:903.90px;top:351.00px;width:357.20px;height:1.00px;background:#e6e9eb"></div><div class="r" style="left:903.90px;top:352.00px;width:357.20px;height:1.00px;background:#f5f6f7"></div><div class="r" style="left:903.90px;top:353.00px;width:357.20px;height:173.00px;background:#fff"></div><div class="r" style="left:903.90px;top:380.00px;width:357.20px;height:1.00px;background:#eff1f2"></div><div class="r" style="left:903.90px;top:381.00px;width:357.20px;height:1.00px;background:#f8f9f9"></div>
<div class="t" style="left:913.80px;top:356.30px;line-height:20px;font-size:8.75px;letter-spacing:-0.250px;font-weight:bold">待办清单</div>
<svg style="left:1231.90px;top:363.50px" width="8" height="8" viewBox="0 0 8 8"><path d="M0.6 5.8 L3.75 2.6 L6.9 5.8" fill="none" stroke="#c4c4c4" stroke-width="1.6"/></svg><svg style="left:1244.80px;top:363.50px" width="7" height="7" viewBox="0 0 7 7"><path d="M0.8 0.8 L5.2 5.2 M5.2 0.8 L0.8 5.2" fill="none" stroke="#c4c4c4" stroke-width="1.5"/></svg>
<div class="r" style="left:916.60px;top:400.20px;width:331.40px;height:21.20px;background:#f3f3f4;border-radius:2.5px"></div>
<svg style="left:923.9px;top:406.20px" width="9" height="9" viewBox="0 0 9 9"><rect x="0" y="0" width="9" height="9" rx="1.2" fill="#2a6fb8"/><path d="M2 4.6 L3.8 6.4 L7.2 2.6" fill="none" stroke="#fff" stroke-width="1.3"/></svg>
<div class="t" style="left:938.00px;top:406.60px;line-height:12px;font-size:7.45px;letter-spacing:0.450px;color:#676a6c;text-decoration:line-through;text-decoration-color:#a9abad;text-decoration-thickness:0.6px;">拜访客户</div>
<div class="r" style="left:916.60px;top:423.00px;width:331.40px;height:21.20px;background:#f3f3f4;border-radius:2.5px"></div>
<svg style="left:923.9px;top:429.00px" width="9" height="9" viewBox="0 0 9 9"><rect x="0.5" y="0.5" width="8" height="8" rx="1.2" fill="#fff" stroke="#5b8fc9" stroke-width="0.9"/></svg>
<div class="t" style="left:938.00px;top:429.40px;line-height:12px;font-size:7.45px;letter-spacing:0.450px;color:#676a6c;">请客户吃饭</div>
<div class="r" style="left:916.60px;top:445.80px;width:331.40px;height:21.20px;background:#f3f3f4;border-radius:2.5px"></div>
<svg style="left:923.9px;top:451.80px" width="9" height="9" viewBox="0 0 9 9"><rect x="0.5" y="0.5" width="8" height="8" rx="1.2" fill="#fff" stroke="#5b8fc9" stroke-width="0.9"/></svg>
<div class="t" style="left:938.00px;top:452.20px;line-height:12px;font-size:7.45px;letter-spacing:0.450px;color:#676a6c;">与客户电话会议</div>
<div class="r" style="left:916.60px;top:468.60px;width:331.40px;height:21.20px;background:#f3f3f4;border-radius:2.5px"></div>
<svg style="left:923.9px;top:474.60px" width="9" height="9" viewBox="0 0 9 9"><rect x="0.5" y="0.5" width="8" height="8" rx="1.2" fill="#fff" stroke="#5b8fc9" stroke-width="0.9"/></svg>
<div class="t" style="left:938.00px;top:475.00px;line-height:12px;font-size:7.45px;letter-spacing:0.450px;color:#676a6c;">汇报会议</div>
<div class="r" style="left:916.60px;top:491.40px;width:331.40px;height:21.20px;background:#f3f3f4;border-radius:2.5px"></div>
<svg style="left:923.9px;top:497.40px" width="9" height="9" viewBox="0 0 9 9"><rect x="0" y="0" width="9" height="9" rx="1.2" fill="#2a6fb8"/><path d="M2 4.6 L3.8 6.4 L7.2 2.6" fill="none" stroke="#fff" stroke-width="1.3"/></svg>
<div class="t" style="left:938.00px;top:497.80px;line-height:12px;font-size:7.45px;letter-spacing:0.450px;color:#676a6c;text-decoration:line-through;text-decoration-color:#a9abad;text-decoration-thickness:0.6px;">项目现场勘查</div>
<div class="r" style="left:998.40px;top:452.00px;width:33.30px;height:11.40px;background:#1ab394;border-radius:1.8px"></div>
<svg style="left:1002.6px;top:454.6px" width="7" height="7" viewBox="0 0 7 7"><circle cx="3.5" cy="3.5" r="2.7" fill="none" stroke="#fff" stroke-width="1"/><path d="M3.5 1.8 V3.7 H2.3" fill="none" stroke="#fff" stroke-width="0.8"/></svg>
<div class="t" style="left:1010.30px;top:452.80px;line-height:10px;font-size:6.25px;letter-spacing:0.250px;color:#fff;font-weight:bold">1 分钟</div>
<div class="r" style="left:528.70px;top:615.00px;width:732.30px;height:1.00px;background:#e6e9eb"></div><div class="r" style="left:528.70px;top:616.00px;width:732.30px;height:1.00px;background:#f5f6f7"></div><div class="r" style="left:528.70px;top:617.00px;width:732.30px;height:35.00px;background:#fff"></div><div class="r" style="left:528.70px;top:644.00px;width:732.30px;height:1.00px;background:#eff1f2"></div><div class="r" style="left:528.70px;top:645.00px;width:732.30px;height:1.00px;background:#f8f9f9"></div>
<div class="t" style="left:537.90px;top:620.70px;line-height:20px;font-size:8.75px;letter-spacing:-0.250px;font-weight:bold">全球交易统计</div>
<svg style="left:1231.50px;top:627.50px" width="8" height="8" viewBox="0 0 8 8"><path d="M0.6 5.8 L3.75 2.6 L6.9 5.8" fill="none" stroke="#c4c4c4" stroke-width="1.6"/></svg><svg style="left:1244.40px;top:627.50px" width="7" height="7" viewBox="0 0 7 7"><path d="M0.8 0.8 L5.2 5.2 M5.2 0.8 L0.8 5.2" fill="none" stroke="#c4c4c4" stroke-width="1.5"/></svg>
<div class="r" style="left:1251.30px;top:56.70px;width:25.50px;height:18.80px;background:#1ab394;border-radius:9.4px 0 0 9.4px"></div>
<svg style="left:1257px;top:59px" width="14" height="14" viewBox="0 0 14 14"><path d="M9.20 3.30 L9.96 3.37 L10.31 4.52 L10.81 4.79 L11.96 4.44 L12.44 5.03 L11.88 6.09 L12.04 6.63 L13.10 7.20 L13.03 7.96 L11.88 8.31 L11.61 8.81 L11.96 9.96 L11.37 10.44 L10.31 9.88 L9.77 10.04 L9.20 11.10 L8.44 11.03 L8.09 9.88 L7.59 9.61 L6.44 9.96 L5.96 9.37 L6.52 8.31 L6.36 7.77 L5.30 7.20 L5.37 6.44 L6.52 6.09 L6.79 5.59 L6.44 4.44 L7.03 3.96 L8.09 4.52 L8.63 4.36Z M10.40 7.20 A1.2 1.2 0 1 0 8.00 7.20 A1.2 1.2 0 1 0 10.40 7.20Z" fill="#fff" fill-rule="evenodd"/><path d="M3.60 1.90 L4.17 1.97 L4.40 2.71 L4.73 2.97 L5.51 3.00 L5.73 3.53 L5.20 4.10 L5.15 4.51 L5.51 5.20 L5.16 5.66 L4.40 5.49 L4.01 5.65 L3.60 6.30 L3.03 6.23 L2.80 5.49 L2.47 5.23 L1.69 5.20 L1.47 4.67 L2.00 4.10 L2.05 3.69 L1.69 3.00 L2.04 2.54 L2.80 2.71 L3.19 2.55Z M4.40 4.10 A0.8 0.8 0 1 0 2.80 4.10 A0.8 0.8 0 1 0 4.40 4.10Z" fill="#fff" fill-rule="evenodd"/><path d="M3.60 8.20 L4.17 8.27 L4.40 9.01 L4.73 9.27 L5.51 9.30 L5.73 9.83 L5.20 10.40 L5.15 10.81 L5.51 11.50 L5.16 11.96 L4.40 11.79 L4.01 11.95 L3.60 12.60 L3.03 12.53 L2.80 11.79 L2.47 11.53 L1.69 11.50 L1.47 10.97 L2.00 10.40 L2.05 9.99 L1.69 9.30 L2.04 8.84 L2.80 9.01 L3.19 8.85Z M4.40 10.40 A0.8 0.8 0 1 0 2.80 10.40 A0.8 0.8 0 1 0 4.40 10.40Z" fill="#fff" fill-rule="evenodd"/></svg>
<div class="r" style="left:0.00px;top:0.00px;width:1280.00px;height:1.00px;background:#d5d5d5"></div>
<div class="r" style="left:0.00px;top:0.00px;width:137.00px;height:1.00px;background:#7a838d"></div>
<div class="r" style="left:1276.50px;top:0.00px;width:3.50px;height:470.00px;background:#939393"></div>
<div class="r" style="left:0.00px;top:651.00px;width:1280.00px;height:1.00px;background:#4d4d4d"></div></body></html>
